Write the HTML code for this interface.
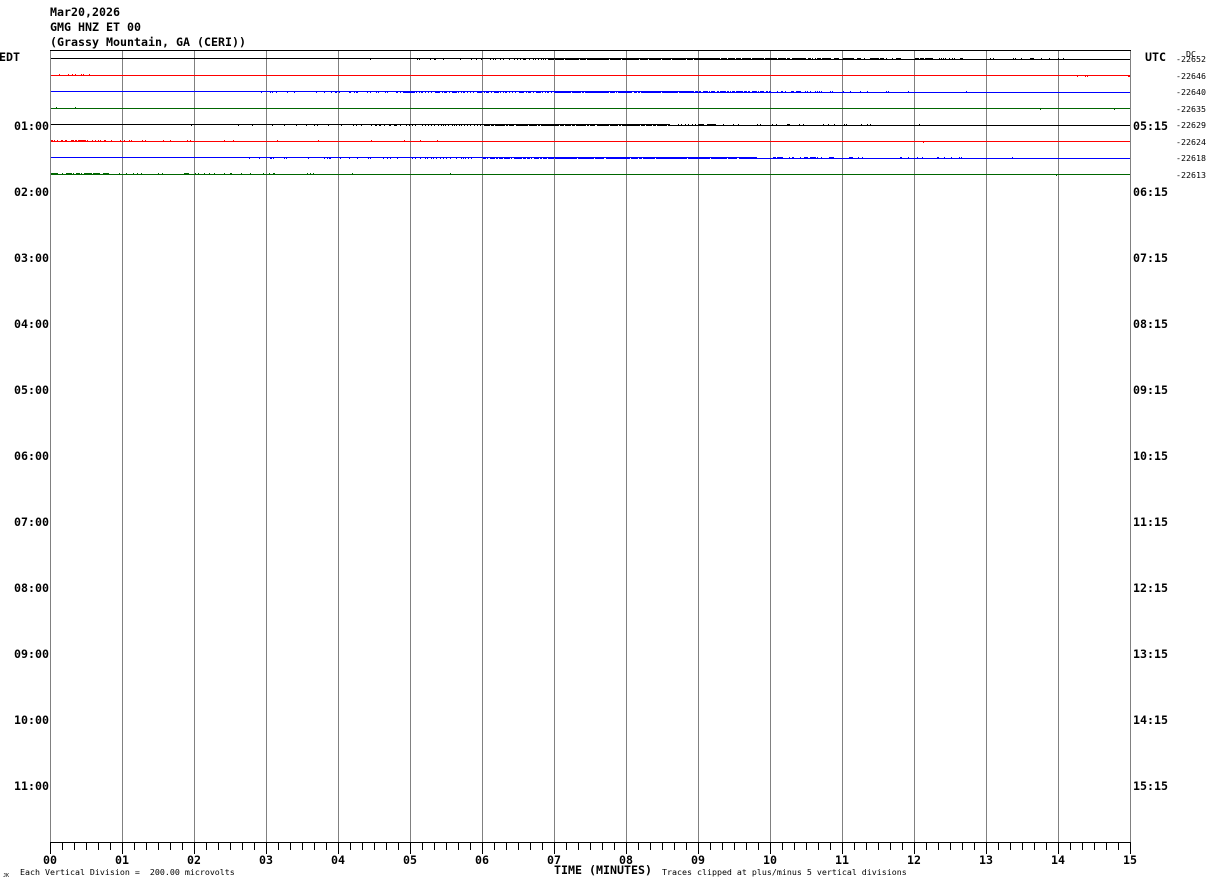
<!DOCTYPE html>
<html><head><meta charset="utf-8"><style>
html,body{margin:0;padding:0;background:#fff}
svg{display:block}
.b{font:bold 11.63px "DejaVu Sans Mono","Liberation Mono",monospace;fill:#000}
.s{font:8.3px "DejaVu Sans Mono","Liberation Mono",monospace;fill:#000}
path{fill:none}
</style></head><body>
<svg width="1210" height="886" viewBox="0 0 1210 886" shape-rendering="crispEdges">
<rect width="1210" height="886" fill="#fff"/>
<path stroke="#808080" d="M50.5 50V842M122.5 50V842M194.5 50V842M266.5 50V842M338.5 50V842M410.5 50V842M482.5 50V842M554.5 50V842M626.5 50V842M698.5 50V842M770.5 50V842M842.5 50V842M914.5 50V842M986.5 50V842M1058.5 50V842M1130.5 50V842"/>
<path stroke="#000" d="M50 50.5H1131M50 842.5H1131"/>
<path stroke="#000" d="M50.5 842V854M62.5 842V850M74.5 842V850M86.5 842V850M98.5 842V850M110.5 842V850M122.5 842V854M134.5 842V850M146.5 842V850M158.5 842V850M170.5 842V850M182.5 842V850M194.5 842V854M206.5 842V850M218.5 842V850M230.5 842V850M242.5 842V850M254.5 842V850M266.5 842V854M278.5 842V850M290.5 842V850M302.5 842V850M314.5 842V850M326.5 842V850M338.5 842V854M350.5 842V850M362.5 842V850M374.5 842V850M386.5 842V850M398.5 842V850M410.5 842V854M422.5 842V850M434.5 842V850M446.5 842V850M458.5 842V850M470.5 842V850M482.5 842V854M494.5 842V850M506.5 842V850M518.5 842V850M530.5 842V850M542.5 842V850M554.5 842V854M566.5 842V850M578.5 842V850M590.5 842V850M602.5 842V850M614.5 842V850M626.5 842V854M638.5 842V850M650.5 842V850M662.5 842V850M674.5 842V850M686.5 842V850M698.5 842V854M710.5 842V850M722.5 842V850M734.5 842V850M746.5 842V850M758.5 842V850M770.5 842V854M782.5 842V850M794.5 842V850M806.5 842V850M818.5 842V850M830.5 842V850M842.5 842V854M854.5 842V850M866.5 842V850M878.5 842V850M890.5 842V850M902.5 842V850M914.5 842V854M926.5 842V850M938.5 842V850M950.5 842V850M962.5 842V850M974.5 842V850M986.5 842V854M998.5 842V850M1010.5 842V850M1022.5 842V850M1034.5 842V850M1046.5 842V850M1058.5 842V854M1070.5 842V850M1082.5 842V850M1094.5 842V850M1106.5 842V850M1118.5 842V850M1130.5 842V854"/>

<!-- black traces -->
<path stroke="#000" d="M51 58.5H700M700 59.5H1130M51 124.5H670M670 125.5H1130"/>
<path stroke="#000" d="M370 59.5h1M417 59.5h1M419 59.5h1M430 59.5h1M434 59.5h2M443 59.5h1M460 59.5h1M471 59.5h1M476 59.5h1M481 59.5h1M490 59.5h1M493 59.5h1M495 59.5h1M500 59.5h1M503 59.5h1M509 59.5h1M514 59.5h1M517 59.5h1M520 59.5h1M523 59.5h3M529 59.5h1M533 59.5h1M535 59.5h1M538 59.5h1M541 59.5h1M543 59.5h1M545 59.5h1M548 59.5h6
M700 58.5h2M771 58.5h6M778 58.5h8M787 58.5h3M792 58.5h7M799 58.5h7M808 58.5h3M812 58.5h1M815 58.5h1M817 58.5h4M822 58.5h9M834 58.5h5M843 58.5h11M857 58.5h4M864 58.5h1M870 58.5h9M880 58.5h4M886 58.5h1M892 58.5h1M896 58.5h5M915 58.5h4M920 58.5h4M925 58.5h8M939 58.5h1M941 58.5h1M943 58.5h1M945 58.5h1M949 58.5h1M952 58.5h1M954 58.5h1M960 58.5h3M990 58.5h1M993 58.5h1M1013 58.5h1M1015 58.5h1M1021 58.5h1M1030 58.5h4M1041 58.5h1M1049 58.5h1M1058 58.5h1M1063 58.5h1
M191 125.5h1M238 125.5h1M252 125.5h1M272 125.5h1M284 125.5h1M296 125.5h1M306 125.5h1M314 125.5h1M317 125.5h1M328 125.5h1M341 125.5h1M353 125.5h1M356 125.5h1M361 125.5h1M371 125.5h1M375 125.5h2M379 125.5h2M384 125.5h1M389 125.5h2M394 125.5h3M400 125.5h1M406 125.5h1M409 125.5h1M412 125.5h1M415 125.5h1M422 125.5h1M425 125.5h1M428 125.5h1M431 125.5h1M434 125.5h1M438 125.5h1M441 125.5h1M443 125.5h1M445 125.5h1M448 125.5h1M452 125.5h1M454 125.5h1M456 125.5h1M459 125.5h1M461 125.5h1M464 125.5h1M467 125.5h1M470 125.5h1M474 125.5h1M477 125.5h1M480 125.5h1
M678 124.5h1M681 124.5h1M685 124.5h1M688 124.5h1M692 124.5h1M695 124.5h1M698 124.5h6M707 124.5h9M723 124.5h1M733 124.5h1M738 124.5h1M757 124.5h1M760 124.5h1M772 124.5h1M776 124.5h1M787 124.5h3M799 124.5h1M803 124.5h1M823 124.5h1M828 124.5h1M834 124.5h1M844 124.5h1M846 124.5h1M861 124.5h1M867 124.5h1M870 124.5h1M919 124.5h1"/>
<path stroke="#000" stroke-dasharray="9 1 14 1 6 1 22 1 11 1 17 1 8 1 12 1" d="M555 59.5H700"/>
<path stroke="#000" stroke-dasharray="18 1 6 1 7 1 5 1 9 1 12 1 14 1" d="M702 58.5H771"/>
<path stroke="#000" stroke-dasharray="6 1 3 1 10 1 2 1 5 2 12 1 8 1 2 1 18 1 4 1" d="M484 125.5H670"/>

<!-- red traces -->
<path stroke="#f00" d="M51 75.5H1130M51 141.5H1130"/>
<path stroke="#f00" d="M59 74.5h1M68 74.5h1M72 74.5h1M75 74.5h1M81 74.5h1M83 74.5h1M89 74.5h1M1077 76.5h1M1085 76.5h1M1087 76.5h1M1128 76.5h2
M51 140.5h2M54 140.5h1M57 140.5h1M61 140.5h2M65 140.5h2M71 140.5h3M75 140.5h2M78 140.5h8M87 140.5h1M92 140.5h1M95 140.5h1M98 140.5h1M100 140.5h1M104 140.5h2M111 140.5h1M120 140.5h1M124 140.5h1M129 140.5h1M131 140.5h1M142 140.5h1M145 140.5h1M163 140.5h1M170 140.5h1M187 140.5h1M190 140.5h1M224 140.5h1M233 140.5h1M277 140.5h1M318 140.5h1M371 140.5h1M404 140.5h1M420 140.5h1M437 140.5h1M923 142.5h1"/>

<!-- blue traces -->
<path stroke="#00f" d="M51 91.5H687M687 92.5H1130M51 157.5H757M757 158.5H1130"/>
<path stroke="#00f" d="M261 92.5h1M270 92.5h1M272 92.5h1M276 92.5h1M287 92.5h1M294 92.5h1M316 92.5h1M324 92.5h1M331 92.5h1M335 92.5h2M339 92.5h1M349 92.5h2M354 92.5h1M356 92.5h2M367 92.5h1M370 92.5h1M376 92.5h1M378 92.5h1M385 92.5h1M387 92.5h1M396 92.5h2M400 92.5h1M403 92.5h7
M777 91.5h1M781 91.5h2M785 91.5h1M791 91.5h3M796 91.5h5M805 91.5h1M807 91.5h1M810 91.5h1M815 91.5h1M817 91.5h1M819 91.5h1M821 91.5h1M830 91.5h1M832 91.5h1M843 91.5h1M850 91.5h1M860 91.5h1M867 91.5h1M886 91.5h1M888 91.5h1M908 91.5h1M966 91.5h1
M249 158.5h1M259 158.5h1M270 158.5h2M273 158.5h1M284 158.5h1M286 158.5h1M308 158.5h1M324 158.5h1M327 158.5h1M329 158.5h2M340 158.5h1M349 158.5h1M357 158.5h1M368 158.5h1M370 158.5h1M383 158.5h1M387 158.5h1M390 158.5h1M397 158.5h1M412 158.5h1M415 158.5h1M420 158.5h1M425 158.5h1M427 158.5h1M431 158.5h1M433 158.5h1M436 158.5h1M440 158.5h1M443 158.5h1M446 158.5h1M450 158.5h1M456 158.5h1M461 158.5h1M463 158.5h1M465 158.5h1M468 158.5h1M471 158.5h1
M773 157.5h3M777 157.5h6M789 157.5h1M792 157.5h2M800 157.5h1M804 157.5h4M810 157.5h6M817 157.5h1M821 157.5h1M829 157.5h5M849 157.5h4M858 157.5h1M862 157.5h1M900 157.5h2M908 157.5h1M917 157.5h1M922 157.5h1M937 157.5h2M944 157.5h1M951 157.5h1M959 157.5h1M961 157.5h1M1012 157.5h1"/>
<path stroke="#00f" stroke-dasharray="5 1 1 2 1 1 2 2 1 2 1 2 1 3 5 2 1 1 3 2 1 2" d="M410 92.5H555"/>
<path stroke="#00f" stroke-dasharray="16 1 9 1 2 1 24 1 5 1 1 1 14 2 3 1 2 1 20 1" d="M555 92.5H687"/>
<path stroke="#00f" stroke-dasharray="7 1 3 1 2 2 5 1 1 1 4 2 2 1 6 1 2 1 1 1 3 1" d="M687 91.5H771"/>
<path stroke="#00f" stroke-dasharray="3 1 1 2 5 1 2 1 4 1 6 1 1 2 8 1 3 1" d="M483 158.5H555"/>
<path stroke="#00f" stroke-dasharray="22 1 16 1 9 2 24 1 7 1 3 1 12 1 31 1" d="M555 158.5H757"/>

<!-- green traces -->
<path stroke="#060" d="M51 108.5H1130M51 174.5H1130"/>
<path stroke="#060" d="M56 107.5h1M75 107.5h1M1040 109.5h1M1114 109.5h1
M51 173.5h7M62 173.5h1M66 173.5h5M71 173.5h1M73 173.5h1M76 173.5h4M81 173.5h1M84 173.5h5M89 173.5h3M93 173.5h7M103 173.5h6M119 173.5h1M126 173.5h1M133 173.5h1M137 173.5h1M141 173.5h1M158 173.5h1M162 173.5h1M184 173.5h5M195 173.5h1M198 173.5h1M204 173.5h1M209 173.5h1M214 173.5h1M224 173.5h1M230 173.5h2M241 173.5h1M250 173.5h1M263 173.5h1M269 173.5h1M273 173.5h2M307 173.5h1M310 173.5h1M313 173.5h1M352 173.5h1M450 173.5h1M1056 175.5h1"/>

<g shape-rendering="auto">
<text class="b" x="50" y="16">Mar20,2026</text>
<text class="b" x="50" y="31">GMG HNZ ET 00</text>
<text class="b" x="50" y="46">(Grassy Mountain, GA (CERI))</text>
<text class="b" x="-1" y="61">EDT</text>
<text class="b" x="1145" y="61">UTC</text>

<text class="b" x="14" y="130">01:00</text>
<text class="b" x="14" y="196">02:00</text>
<text class="b" x="14" y="262">03:00</text>
<text class="b" x="14" y="328">04:00</text>
<text class="b" x="14" y="394">05:00</text>
<text class="b" x="14" y="460">06:00</text>
<text class="b" x="14" y="526">07:00</text>
<text class="b" x="14" y="592">08:00</text>
<text class="b" x="14" y="658">09:00</text>
<text class="b" x="14" y="724">10:00</text>
<text class="b" x="14" y="790">11:00</text>

<text class="b" x="1133" y="130">05:15</text>
<text class="b" x="1133" y="196">06:15</text>
<text class="b" x="1133" y="262">07:15</text>
<text class="b" x="1133" y="328">08:15</text>
<text class="b" x="1133" y="394">09:15</text>
<text class="b" x="1133" y="460">10:15</text>
<text class="b" x="1133" y="526">11:15</text>
<text class="b" x="1133" y="592">12:15</text>
<text class="b" x="1133" y="658">13:15</text>
<text class="b" x="1133" y="724">14:15</text>
<text class="b" x="1133" y="790">15:15</text>

<text class="s" x="1186" y="57">DC</text>
<text class="s" x="1176" y="62">-22652</text>
<text class="s" x="1176" y="79">-22646</text>
<text class="s" x="1176" y="95">-22640</text>
<text class="s" x="1176" y="112">-22635</text>
<text class="s" x="1176" y="128">-22629</text>
<text class="s" x="1176" y="145">-22624</text>
<text class="s" x="1176" y="161">-22618</text>
<text class="s" x="1176" y="178">-22613</text>

<text class="b" x="43" y="864">00</text>
<text class="b" x="115" y="864">01</text>
<text class="b" x="187" y="864">02</text>
<text class="b" x="259" y="864">03</text>
<text class="b" x="331" y="864">04</text>
<text class="b" x="403" y="864">05</text>
<text class="b" x="475" y="864">06</text>
<text class="b" x="547" y="864">07</text>
<text class="b" x="619" y="864">08</text>
<text class="b" x="691" y="864">09</text>
<text class="b" x="763" y="864">10</text>
<text class="b" x="835" y="864">11</text>
<text class="b" x="907" y="864">12</text>
<text class="b" x="979" y="864">13</text>
<text class="b" x="1051" y="864">14</text>
<text class="b" x="1123" y="864">15</text>

<text class="b" x="554" y="874">TIME (MINUTES)</text>
<text class="s" x="20" y="875" xml:space="preserve">Each Vertical Division =  200.00 microvolts</text>
<text class="s" x="662" y="875">Traces clipped at plus/minus 5 vertical divisions</text>
<text x="3" y="877" style="font:5px 'DejaVu Sans Mono',monospace">JK</text>
</g>
</svg>
</body></html>
